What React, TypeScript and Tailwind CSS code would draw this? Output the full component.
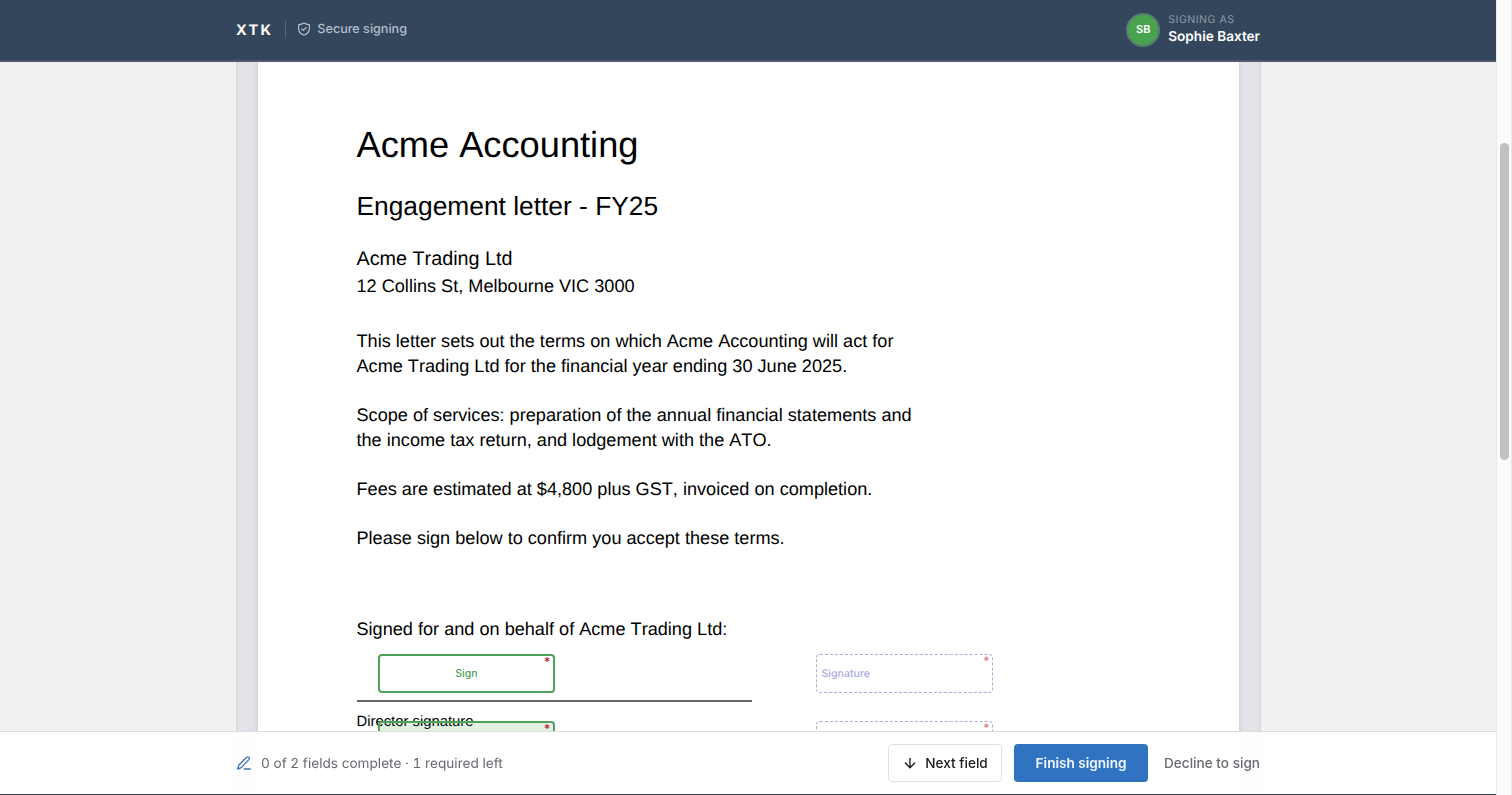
import { ArrowDown } from "lucide-react";

type FieldProps = { label?: string; className: string; tint?: boolean };

function ShieldIcon({ className }: { className?: string }) {
  return (
    <svg
      viewBox="0 0 14 14"
      fill="none"
      stroke="currentColor"
      strokeWidth="1.2"
      strokeLinecap="round"
      strokeLinejoin="round"
      className={className}
    >
      <path d="M7 .9c1.4 1 3.1 1.6 5.3 1.7v4.1c0 3.1-2 5.2-5.3 6.5C3.7 11.9 1.7 9.8 1.7 6.7V2.6C3.9 2.5 5.6 1.9 7 .9Z" />
      <path d="m4.9 7 1.5 1.4 2.7-2.8" />
    </svg>
  );
}

function PenIcon({ className }: { className?: string }) {
  return (
    <svg
      viewBox="0 0 24 24"
      fill="none"
      stroke="currentColor"
      strokeWidth="2"
      strokeLinecap="round"
      strokeLinejoin="round"
      className={className}
    >
      <path d="M12.500 21h9" />
      <path d="M16 3.500a2.300 2.300 0 0 1 3.500 3L8 19l-5.500 2 1.500-5.500Z" />
    </svg>
  );
}

function SignField({ label, className, tint }: FieldProps) {
  return (
    <button
      className={`absolute flex h-[39px] w-[177px] items-center justify-center rounded-[4px] border-2 border-[#4fa25a] text-[10.6px] font-medium text-[#4fa25a] ${tint ? "bg-[#4ca64f]/15" : "bg-white"} ${className}`}
    >
      <span className="pt-[2px] pl-px">{label}</span>
      <span className="absolute top-0 right-[2px] text-[12px] leading-[12px] font-bold text-[#c22f3d]">*</span>
    </button>
  );
}

function OtherField({ label, className }: FieldProps) {
  return (
    <div
      className={`absolute flex h-[39px] w-[177px] items-center rounded-[4px] border border-dashed border-[#a9aed4] pl-[5px] text-[10.6px] font-medium text-[#adaae2] ${className}`}
    >
      <span className="pt-[2px]">{label}</span>
      <span className="absolute top-0 right-[2px] text-[12px] leading-[12px] font-medium text-[#cf8589]">*</span>
    </div>
  );
}

function Letter() {
  return (
    <article className="relative h-[1300px] w-[981px] shrink-0 bg-white pt-[63px] pl-[99px] font-['Liberation_Sans',Arial,sans-serif] text-[18.14px] leading-[24.7px] text-black shadow-[0_0_4px_rgba(30,41,59,0.18)] [font-kerning:none]">
      <h1 className="text-[36.24px] leading-[40px]">Acme Accounting</h1>
      <h2 className="mt-[26px] text-[26.35px] leading-[30px]">Engagement letter - FY25</h2>
      <p className="mt-[24.5px] text-[19.77px] leading-[26px]">Acme Trading Ltd</p>
      <p className="mt-[2.7px]">12 Collins St, Melbourne VIC 3000</p>
      <p className="mt-[29.8px] leading-[25px]">
        This letter sets out the terms on which Acme Accounting will act for
        <br />
        Acme Trading Ltd for the financial year ending 30 June 2025.
      </p>
      <p className="mt-[24.3px] leading-[25px]">
        Scope of services: preparation of the annual financial statements and
        <br />
        the income tax return, and lodgement with the ATO.
      </p>
      <p className="mt-[23.9px]">Fees are estimated at $4,800 plus GST, invoiced on completion.</p>
      <p className="mt-[24.7px]">Please sign below to confirm you accept these terms.</p>
      <p className="mt-[66px]">Signed for and on behalf of Acme Trading Ltd:</p>
      <div className="mt-[58.6px] h-[1.5px] w-[395px] bg-[#66666a]" />
      <p className="mt-[10px] text-[14.83px] leading-[20px]">Director signature</p>
      <div className="font-[Inter,sans-serif] [font-kerning:auto]">
        <SignField label="Sign" className="top-[592px] left-[120px]" />
        <SignField className="top-[659px] left-[120px]" tint />
        <OtherField label="Signature" className="top-[592px] left-[558px]" />
        <OtherField className="top-[659px] left-[558px]" />
      </div>
    </article>
  );
}

function Header() {
  return (
    <header className="relative z-10 flex h-[62px] shrink-0 justify-center border-b-2 border-[#515a70] bg-[#34465b]">
      <div className="flex w-[1024px] items-center justify-between pb-px">
        <div className="flex items-center">
          <span className="pt-[2px] text-[14.6px] font-bold tracking-[2.3px] text-white">XTK</span>
          <span className="ml-[12px] h-[18px] w-px bg-[#566679]" />
          <ShieldIcon className="ml-[11px] size-[14px] text-[#b6c2d0]" />
          <span className="ml-[6px] pt-[2px] text-[12.6px] font-medium text-[#b2bfcd]">Secure signing</span>
        </div>
        <div className="flex items-center gap-[8px]">
          <div className="flex size-[34px] items-center justify-center rounded-full border-2 border-[#577c71] bg-[#49a24d] text-[11px] font-semibold text-white">
            SB
          </div>
          <div className="pb-px">
            <div className="text-[10.6px] leading-[15px] tracking-[0.5px] text-[#8b99aa]">SIGNING AS</div>
            <div className="pt-px text-[13.6px] leading-[18px] font-semibold text-white">Sophie Baxter</div>
          </div>
        </div>
      </div>
    </header>
  );
}

function Footer() {
  return (
    <footer className="relative z-10 flex h-[63px] shrink-0 justify-center border-t border-[#dcdddf] bg-white/95 backdrop-blur-sm">
      <div className="flex w-[1024px] items-center justify-between">
        <div className="flex items-center gap-[9px] text-[13.63px] text-[#64686e] tabular-nums">
          <PenIcon className="size-[16px] text-[#3b72b5]" />
          <span className="pt-[2px]">0 of 2 fields complete · 1 required left</span>
        </div>
        <div className="flex items-center text-[13.6px] font-medium">
          <button className="flex h-[38px] w-[114px] items-center justify-center gap-[7px] rounded-[4px] border border-[#dfe0e2] bg-white text-[#17191c]">
            <ArrowDown className="size-[16px]" strokeWidth={2} />
            Next field
          </button>
          <button className="ml-[12px] h-[38px] w-[134px] rounded-[4px] bg-[#3074c1] font-semibold text-[#f1f7fd]">
            Finish signing
          </button>
          <button className="ml-[16px] text-[#686b70]">Decline to sign</button>
        </div>
      </div>
    </footer>
  );
}

export default function App() {
  return (
    <div className="flex h-[795px] w-full overflow-hidden bg-white font-[Inter,sans-serif] [text-rendering:geometricPrecision]">
      <div className="flex min-w-0 flex-1 flex-col border-b border-[#34404f]">
        <Header />
        <main className="-mb-[63px] flex min-h-0 flex-1 justify-center overflow-hidden bg-[#f1f1f1]">
          <div className="flex w-[1025px] justify-center border-x-2 border-[#d9dbe0] bg-[#e1e3e8]">
            <Letter />
          </div>
        </main>
        <Footer />
      </div>
      <div className="flex w-[16px] justify-center border-x border-[#e9e9e9] bg-[#fbfbfb] pt-[143px]">
        <div className="h-[317px] w-[9px] rounded-full bg-[#c1c1c1]" />
      </div>
    </div>
  );
}
